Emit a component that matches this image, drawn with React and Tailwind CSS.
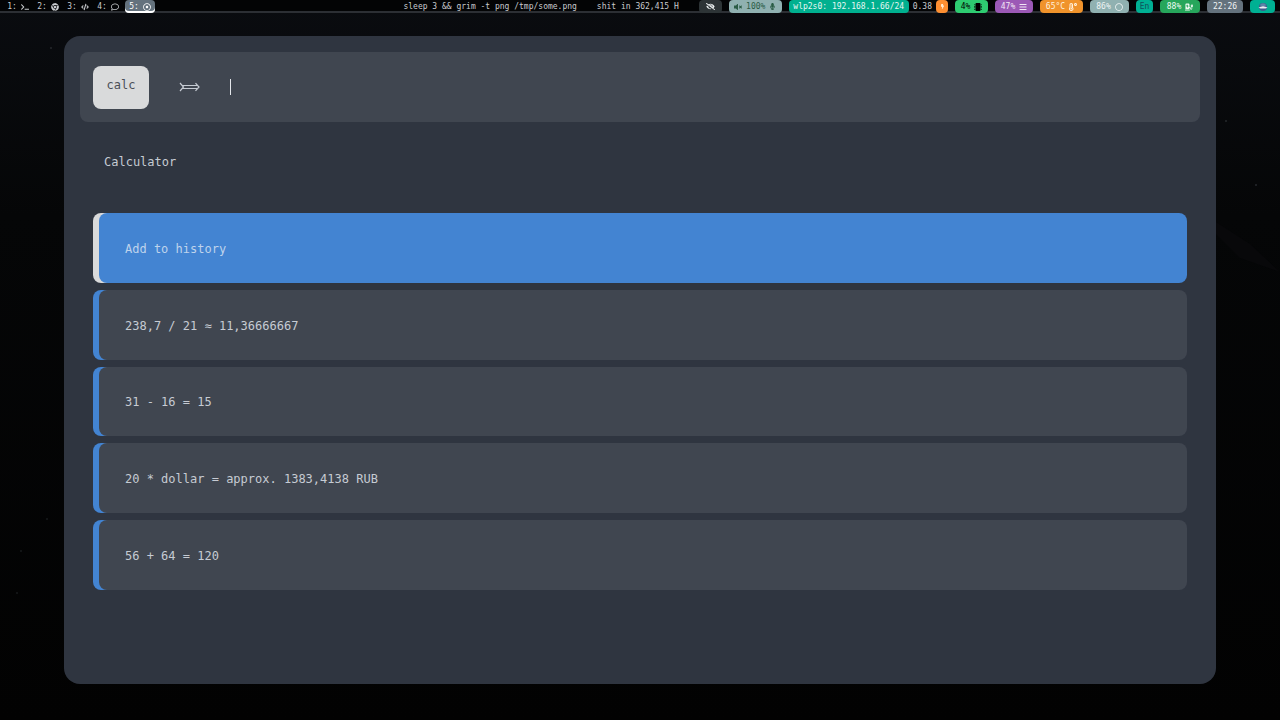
import {
  FaTerminal,
  FaChrome,
  FaCode,
  FaRegComment,
  FaRegDotCircle,
  FaEyeSlash,
  FaVolumeMute,
  FaMicrophone,
  FaBolt,
  FaMicrochip,
  FaBars,
  FaTemperatureHigh,
  FaRegCircle,
  FaChargingStation,
} from "react-icons/fa";

const workspaces = [
  { id: 1, icon: FaTerminal },
  { id: 2, icon: FaChrome },
  { id: 3, icon: FaCode },
  { id: 4, icon: FaRegComment },
  { id: 5, icon: FaRegDotCircle, active: true },
];

const entries = [
  "Add to history",
  "238,7 / 21 ≈ 11,36666667",
  "31 - 16 = 15",
  "20 * dollar = approx. 1383,4138 RUB",
  "56 + 64 = 120",
];

function Chip({ className, children }) {
  return (
    <div
      className={`flex h-[13px] items-center justify-center gap-1 rounded-sm whitespace-nowrap ${className}`}
    >
      {children}
    </div>
  );
}

function StatusBar() {
  return (
    <header className="flex h-[13px] items-start bg-[linear-gradient(#030405_11px,#2c2f34_11px)] text-[8px] leading-[13px] text-[#c8cacd]">
      <nav className="flex pl-[3px]">
        {workspaces.map(({ id, icon: Icon, active }) => (
          <button
            key={id}
            className={
              active
                ? "ml-0.5 flex h-[13px] w-[30px] items-center justify-center gap-1 rounded-sm bg-[#64727d] text-white shadow-[inset_0_-2px_#ffffff]"
                : "flex h-[13px] w-[30px] items-center justify-center gap-1"
            }
          >
            <span>{id}:</span>
            <Icon className="size-2" />
          </button>
        ))}
      </nav>

      <div className="mr-5 ml-auto flex gap-5 whitespace-nowrap">
        <span>sleep 3 &amp;&amp; grim -t png /tmp/some.png</span>
        <span>shit in 362,415 H</span>
      </div>

      <div className="flex gap-[7px] pr-[5px]">
        <Chip className="w-[23px] bg-[#2d3436] text-[#ecf0f1]">
          <FaEyeSlash className="size-[9px]" />
        </Chip>
        <Chip className="w-[53px] bg-[#90b1b1] text-[#2a5c45]">
          <FaVolumeMute className="size-2" />
          <span>100%</span>
          <FaMicrophone className="size-[7px]" />
        </Chip>
        <div className="flex gap-1">
          <Chip className="w-[120px] bg-[#00b08f] text-[#e6f7f3]">
            <span>wlp2s0: 192.168.1.66/24</span>
          </Chip>
          <span>0.38</span>
          <Chip className="w-3 bg-[#fd8f32] text-[#fff0dc]">
            <FaBolt className="size-[5px]" />
          </Chip>
        </div>
        <Chip className="w-[33px] bg-[#2ecc71] text-black">
          <span>4%</span>
          <FaMicrochip className="size-2" />
        </Chip>
        <Chip className="w-[38px] bg-[#9b59b6] text-[#f1e6f5]">
          <span>47%</span>
          <FaBars className="size-2" />
        </Chip>
        <Chip className="w-[43px] bg-[#f0932b] text-[#fff0dc]">
          <span>65°C</span>
          <FaTemperatureHigh className="size-2" />
        </Chip>
        <Chip className="w-[39px] bg-[#90b1b1] text-[#eef4f4]">
          <span>86%</span>
          <FaRegCircle className="size-2" />
        </Chip>
        <Chip className="w-[17px] bg-[#00b093] text-[#10505c]">
          <span>En</span>
        </Chip>
        <Chip className="w-10 bg-[#26a65b] text-[#eefaf2]">
          <span>88%</span>
          <FaChargingStation className="size-2" />
        </Chip>
        <Chip className="w-9 bg-[#64727d] text-[#f0f2f4]">
          <span>22:26</span>
        </Chip>
        <Chip className="w-[25px] bg-[#00b093]">
          <svg viewBox="0 0 10 10" className="size-[10px]">
            <circle cx="5" cy="5" r="4" fill="#3e5b8c" />
            <path d="M1.6 3.2a4 4 0 0 1 6.8 0L5 4.4z" fill="#5c86a8" />
            <path d="M.5 5.8 2.5 4.7 5 4.2l2.5.5 2 1.1-2 .8h-5z" fill="#e8edf2" />
          </svg>
        </Chip>
      </div>
    </header>
  );
}

// Faint stars and haze of the wallpaper
function Wallpaper() {
  return (
    <svg
      className="absolute inset-0 -z-10 h-full w-full"
      viewBox="0 0 1280 720"
      preserveAspectRatio="none"
      aria-hidden="true"
    >
      <defs>
        <linearGradient id="sky" x1="0" y1="0" x2="0" y2="1">
          <stop offset="0" stopColor="#0a0c10" />
          <stop offset="0.3" stopColor="#050607" />
          <stop offset="1" stopColor="#020202" />
        </linearGradient>
      </defs>
      <rect width="1280" height="720" fill="url(#sky)" />
      <path d="M1216 222 1250 244 1280 272 1240 258 1216 234z" fill="#08080a" />
      <g fill="#26292d">
        <circle cx="1226" cy="121" r="1" />
        <circle cx="1256" cy="185" r="1" />
        <circle cx="51" cy="48" r="1" />
        <circle cx="47" cy="519" r="0.8" />
        <circle cx="21" cy="551" r="0.8" />
        <circle cx="17" cy="593" r="0.8" />
      </g>
    </svg>
  );
}

function Arrow() {
  return (
    <svg
      viewBox="0 0 21 10"
      className="ml-[30px] h-[10px] w-[21px]"
      fill="none"
      stroke="#c6cbd3"
      strokeWidth="1.2"
      aria-hidden="true"
    >
      <path d="M1 1 4.5 5 1 9M3 3.5H18M3 6.5H18M16.5 1.2 20 5 16.5 8.8" />
    </svg>
  );
}

export default function App() {
  return (
    <div className="relative isolate flex h-screen min-h-[640px] flex-col bg-black font-['DejaVu_Sans_Mono',monospace] text-xs text-[#c6cbd3]">
      <Wallpaper />
      <StatusBar />

      <main className="mx-auto mt-[23px] h-[90%] w-[90%] rounded-2xl bg-[#2f3540] p-4">
        <div className="flex h-[70px] items-center rounded-lg bg-[#404650] px-[13px]">
          <label
            htmlFor="expression"
            className="flex h-[43px] w-14 items-center justify-center rounded-lg bg-[#d9dadb] pb-1 text-[#4b4f57]"
          >
            calc
          </label>
          <Arrow />
          <span className="ml-[30px] h-4 w-px bg-[#e4e7eb]" />
          <input
            id="expression"
            type="text"
            className="h-8 min-w-0 flex-1 bg-transparent outline-none"
          />
        </div>

        <h1 className="mt-8 px-6 leading-4">Calculator</h1>

        <ul className="mt-[43px] grid min-h-[377px] auto-rows-fr gap-[7px] px-[13px]">
          {entries.map((entry, index) => (
            <li
              key={entry}
              className={`flex rounded-l-lg rounded-r-2xl pl-[6px] ${
                index === 0 ? "bg-[#d9dadb]" : "bg-[#4384d2]"
              }`}
            >
              <button
                className={`flex-1 rounded-lg px-[26px] pt-0.5 text-left ${
                  index === 0 ? "bg-[#4384d2] text-[#bfd3ec]" : "bg-[#404650]"
                }`}
              >
                {entry}
              </button>
            </li>
          ))}
        </ul>
      </main>
    </div>
  );
}
